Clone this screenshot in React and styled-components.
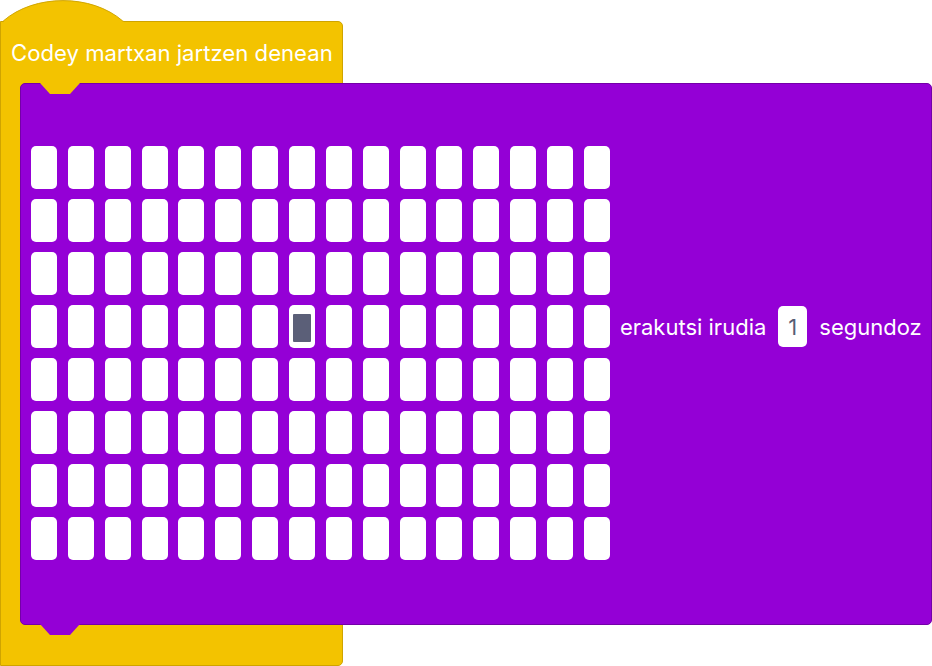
import React from "react";
import styled, { createGlobalStyle } from "styled-components";

const YELLOW = "#f3c300";
const YELLOW_EDGE = "#cfa400";
const PURPLE = "#9400d6";
const PURPLE_EDGE = "#7400a8";

const Global = createGlobalStyle`
  html, body {
    margin: 0;
    padding: 0;
    background: #ffffff;
    overflow: hidden;
  }
  body {
    font-family: Inter, "Noto Sans", "Liberation Sans", sans-serif;
  }
`;

const Canvas = styled.div`
  display: flex;
  flex-direction: column;
  align-items: flex-start;
  width: 932px;
  height: 666px;
`;

const Cap = styled.svg`
  display: block;
  width: 126px;
  height: 23px;
  margin-bottom: -1px;
  position: relative;
  z-index: 1;
`;

const EventBlock = styled.div`
  box-sizing: border-box;
  width: 343px;
  background: ${YELLOW};
  border: 1px solid ${YELLOW_EDGE};
  border-radius: 0 5px 5px 0;
`;

const Header = styled.div`
  height: 61px;
  display: flex;
  align-items: center;
  padding-left: 10px;
  color: #ffffff;
  font-size: 22.15px;
  font-weight: 400;
  white-space: nowrap;
`;

const Mouth = styled.div`
  padding-left: 19px;
`;

const Foot = styled.div`
  height: 40px;
`;

const LooksBlock = styled.div`
  position: relative;
  box-sizing: border-box;
  width: 912px;
  height: 542px;
  background: ${PURPLE};
  border: 1px solid ${PURPLE_EDGE};
  border-radius: 5px;
  padding: 62px 0 0 10px;
  display: flex;
  align-items: flex-start;

  &::before {
    content: "";
    position: absolute;
    left: 19px;
    top: -1px;
    width: 40px;
    height: 11px;
    background: ${YELLOW};
    clip-path: polygon(0 0, 100% 0, 75% 100%, 25% 100%);
  }

  &::after {
    content: "";
    position: absolute;
    left: 19px;
    bottom: -11px;
    width: 40px;
    height: 11px;
    background: ${PURPLE};
    clip-path: polygon(0 0, 100% 0, 75% 100%, 25% 100%);
  }
`;

const Matrix = styled.div`
  display: grid;
  grid-template-columns: repeat(16, 26px);
  grid-auto-rows: 43px;
  column-gap: 10.87px;
  row-gap: 10px;
`;

const Cell = styled.div`
  background: #ffffff;
  border-radius: 5px;
  display: flex;
  align-items: center;
  justify-content: center;
`;

const Lit = styled.div`
  width: 18px;
  height: 28px;
  margin-top: 2px;
  background: #5b5f78;
  border-radius: 1px;
`;

const Label = styled.div`
  display: flex;
  align-items: center;
  gap: 12px;
  margin: 160px 0 0 10px;
  color: #ffffff;
  font-size: 22px;
  white-space: nowrap;
`;

const NumberInput = styled.div`
  box-sizing: border-box;
  width: 29px;
  height: 41px;
  background: #ffffff;
  border-radius: 5px;
  display: flex;
  align-items: center;
  justify-content: center;
  color: #575e75;
  font-size: 22px;
`;

export default function App() {
  const cells = [];
  for (let r = 0; r < 8; r++) {
    for (let c = 0; c < 16; c++) {
      cells.push(
        <Cell key={`${r}-${c}`}>{r === 3 && c === 7 ? <Lit /> : null}</Cell>
      );
    }
  }
  return (
    <>
      <Global />
      <Canvas>
        <Cap viewBox="0 0 126 23">
          <path
            d="M0.5,23 L0.5,22 C33,-6.5 93,-6.5 125.5,22 L126,22 L126,23 Z"
            fill={YELLOW}
          />
          <path
            d="M0.5,23 L0.5,22 C33,-6.5 93,-6.5 125.5,22 L126,22"
            fill="none"
            stroke={YELLOW_EDGE}
            strokeWidth="1"
          />
        </Cap>
        <EventBlock>
          <Header>Codey martxan jartzen denean</Header>
          <Mouth>
            <LooksBlock>
              <Matrix>{cells}</Matrix>
              <Label>
                <span>erakutsi irudia</span>
                <NumberInput>1</NumberInput>
                <span>segundoz</span>
              </Label>
            </LooksBlock>
          </Mouth>
          <Foot />
        </EventBlock>
      </Canvas>
    </>
  );
}
